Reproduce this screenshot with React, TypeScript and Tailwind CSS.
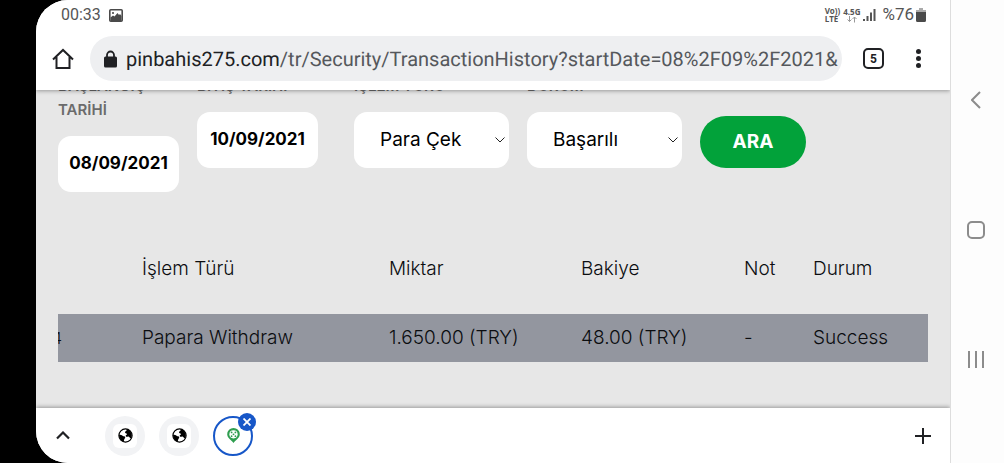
const columns = [
  { name: '', width: 'w-[84px]' },
  { name: 'İşlem Türü', width: 'w-[247px]' },
  { name: 'Miktar', width: 'w-[192px]' },
  { name: 'Bakiye', width: 'w-[163px]' },
  { name: 'Not', width: 'w-[69px]' },
  { name: 'Durum', width: '' },
];

const rows = [['4', 'Papara Withdraw', '1.650.00 (TRY)', '48.00 (TRY)', '-', 'Success']];

function Globe() {
  return (
    <svg width="15" height="15" viewBox="0 0 15 15">
      <circle cx="7.500" cy="7.500" r="6.600" fill="#fff" stroke="#000" strokeWidth="1.200" />
      <path d="M8.500 1C10 1.300 13.800 3.500 13.800 7.200c0 1.200-.4 2.300-1 3.200-1-.2-1.200-1.500-2.300-1.900-.9-.3-1.300.6-2.300.2-.9-.4-.5-1.600.3-1.900C9.700 6.400 8.800 5.600 7.700 5.200 7 4.900 6.700 4.200 7.300 3.600c.8-.6 1.700-.8 1.200-2.600z" />
      <path d="M1 6.800c1.300-.2 2.700.1 3.600.9.900.8 2.300.3 2.600 1.500.2 1-.8 1.300-1 2.200-.2.900-.5 1.700-.4 2.400C3 13 1 10.500 1 6.800z" />
    </svg>
  );
}

function StatusBar() {
  return (
    <div className="flex h-[30px] items-center justify-between pl-[25px] pr-6 font-[Roboto] text-[#555]">
      <div className="flex items-center gap-2">
        <span className="text-base">00:33</span>
        <svg width="14" height="13" viewBox="0 0 14 13">
          <rect x=".8" y=".8" width="12.400" height="11.400" rx="1" fill="#fff" stroke="#4a4a4a" strokeWidth="1.600" />
          <path d="M1.500 12V8.500L4 6.500l1.500 1 3-3.500L10 6l1-1 1.500 2v5z" fill="#4a4a4a" />
          <circle cx="4" cy="4" r="1.100" fill="#4a4a4a" />
        </svg>
      </div>
      <div className="flex items-center">
        <div className="font-[Open_Sans] text-[8px] leading-[8px] font-bold">
          <div>Vo))</div>
          <div>LTE</div>
        </div>
        <div className="ml-[3px] text-center font-[Open_Sans] text-[8px] leading-[8px] font-bold">
          <div>4.5G</div>
          <svg width="10" height="7" viewBox="0 0 10 7" fill="none" stroke="#999" className="mx-auto">
            <path d="M2.500 0v5.500M.5 3.500l2 2 2-2M7.500 6.500V1M5.500 3l2-2 2 2" />
          </svg>
        </div>
        <svg width="13" height="14" viewBox="0 0 13 14" fill="currentColor" className="ml-[3px]">
          <path d="M0 11h2v2H0zM3.500 8h2v5h-2zM7 4.500h2V13H7zM10.500 1h2v12h-2z" />
        </svg>
        <span className="ml-1.5 text-[17px]">%76</span>
        <svg width="10" height="14" viewBox="0 0 10 14" className="ml-0.5">
          <path d="M3 0h4v2h3v3H0V2h3z" fill="#aaa" />
          <path d="M0 4h10v8.500a1.500 1.500 0 0 1-1.500 1.500h-7A1.500 1.500 0 0 1 0 12.500z" fill="#4a4a4a" />
        </svg>
      </div>
    </div>
  );
}

function AddressBar() {
  return (
    <div className="flex h-[60px] items-center pb-[3px] pl-[16px] pr-[29px]">
      <button aria-label="Home" className="shrink-0">
        <svg width="22" height="22" viewBox="0 0 22 22" fill="none" stroke="#202124" strokeWidth="2">
          <path d="M1 11.500 11 2l10 9.500M4.500 9v11h13V9" />
        </svg>
      </button>
      <div className="ml-4 flex h-[45px] min-w-0 flex-1 items-center rounded-full bg-[#eeeff1] pl-[14px]">
        <svg width="13" height="18" viewBox="0 0 13 18" className="shrink-0">
          <path d="M3 8V5a3.500 3.500 0 0 1 7 0v3" fill="none" stroke="#202124" strokeWidth="1.800" />
          <rect y="6.500" width="13" height="11" rx="1.500" fill="#202124" />
        </svg>
        <div className="ml-[9px] font-[Roboto] text-[20px] whitespace-nowrap text-[#55585c] [text-rendering:geometricPrecision]">
          <span className="text-[#202124]">pinbahis275.com</span>
          /tr/Security/TransactionHistory?startDate=08%2F09%2F2021&amp;
        </div>
      </div>
      <button className="ml-[21px] flex size-[21px] shrink-0 items-center justify-center rounded-[5px] border-2 border-[#202124] font-[Roboto] text-[12px] font-bold text-[#202124]">
        5
      </button>
      <button aria-label="Menu" className="ml-[32px] flex shrink-0 flex-col gap-[2px]">
        <span className="size-[5px] rounded-full bg-[#202124]" />
        <span className="size-[5px] rounded-full bg-[#202124]" />
        <span className="size-[5px] rounded-full bg-[#202124]" />
      </button>
    </div>
  );
}

function DateField({ id, label, value }: { id: string; label: string; value: string }) {
  return (
    <div className="flex w-[121px] flex-col gap-[14px]">
      <label htmlFor={id} className="text-[15px] leading-6 font-semibold text-[#6b6b6b]">
        {label}
      </label>
      <input
        id={id}
        type="text"
        defaultValue={value}
        className="h-14 w-full rounded-[13px] bg-white pb-0.5 text-center text-[17px] font-bold text-black"
      />
    </div>
  );
}

function SelectField({ id, label, value }: { id: string; label: string; value: string }) {
  return (
    <div className="flex w-[155px] flex-col gap-[14px]">
      <label htmlFor={id} className="text-[15px] leading-6 font-semibold text-[#6b6b6b]">
        {label}
      </label>
      <div className="relative">
        <select
          id={id}
          defaultValue={value}
          className="h-14 w-full appearance-none rounded-[13px] bg-white pl-[26px] text-[19px] text-black"
        >
          <option>{value}</option>
        </select>
        <svg
          width="10"
          height="6"
          viewBox="0 0 10 6"
          fill="none"
          stroke="#222"
          className="pointer-events-none absolute top-[25px] right-1"
        >
          <path d="M.5.5 5 5 9.500.5" />
        </svg>
      </div>
    </div>
  );
}

function TransactionTable() {
  return (
    <table className="mt-[53px] w-full table-fixed text-left text-[19px] text-[#0b0d10]">
      <thead>
        <tr className="h-12">
          {columns.map((col) => (
            <th key={col.name} className={`${col.width} font-light`}>
              {col.name}
            </th>
          ))}
        </tr>
      </thead>
      <tbody>
        <tr className="h-[21px]" />
        {rows.map((row) => (
          <tr key={row[1]} className="h-12 bg-[#93969f]">
            {row.map((cell, i) => (
              <td key={i} className={i === 0 ? 'overflow-hidden text-base font-light' : 'font-light'}>
                <span className={i === 0 ? '-ml-1.5' : ''}>{cell}</span>
              </td>
            ))}
          </tr>
        ))}
      </tbody>
    </table>
  );
}

function TabStrip() {
  return (
    <footer className="relative flex h-[55px] shrink-0 items-center bg-white pl-5 pr-[19px] shadow-[0_-1px_4px_rgba(0,0,0,0.35)]">
      <button aria-label="Show tabs">
        <svg width="14" height="9" viewBox="0 0 14 9" fill="none" stroke="#202124" strokeWidth="2.200">
          <path d="m1 7.500 6-6 6 6" />
        </svg>
      </button>
      <div className="ml-[35px] flex gap-[14px]">
        {[1, 2].map((tab) => (
          <button
            key={tab}
            aria-label="Tab"
            className="flex size-10 items-center justify-center rounded-full bg-[#f2f3f5]"
          >
            <span className="flex size-6 items-center justify-center rounded-[6px] bg-white">
              <Globe />
            </span>
          </button>
        ))}
        <div className="relative">
          <button
            aria-label="Current tab"
            className="flex size-10 items-center justify-center rounded-full border-2 border-[#1757c8]"
          >
            <svg width="13" height="15" viewBox="0 0 13 15">
              <path d="M6.500 0A6.300 6.300 0 0 0 .2 6.300C.2 10 4 11.500 6.500 15 9 11.500 12.800 10 12.800 6.300A6.300 6.300 0 0 0 6.500 0z" fill="#2f9e50" />
              <circle cx="6.500" cy="6.300" r="4.100" fill="#fff" />
              <g fill="#2f9e50">
                <circle cx="6.500" cy="6.300" r=".9" />
                <circle cx="4.600" cy="4.400" r=".9" />
                <circle cx="8.400" cy="4.400" r=".9" />
                <circle cx="4.600" cy="8.200" r=".9" />
                <circle cx="8.400" cy="8.200" r=".9" />
              </g>
            </svg>
          </button>
          <button
            aria-label="Close tab"
            className="absolute -top-[3px] -right-[3px] flex size-[18px] items-center justify-center rounded-full bg-[#1757c8]"
          >
            <svg width="8" height="8" viewBox="0 0 8 8" stroke="#fff" strokeWidth="1.800">
              <path d="m.5.5 7 7M7.500.5l-7 7" />
            </svg>
          </button>
        </div>
      </div>
      <button aria-label="New tab" className="ml-auto">
        <svg width="16" height="16" viewBox="0 0 16 16" stroke="#202124" strokeWidth="2">
          <path d="M8 0v16M0 8h16" />
        </svg>
      </button>
    </footer>
  );
}

function SystemNav() {
  return (
    <nav className="flex w-[54px] shrink-0 flex-col items-center justify-between border-l border-[#ddd] bg-[#fdfdfd] pt-[91px] pr-1 pb-[95px]">
      <button aria-label="Back">
        <svg width="10" height="18" viewBox="0 0 10 18" fill="none" stroke="#8c8c8c" strokeWidth="2">
          <path d="M9 1 1 9l8 8" />
        </svg>
      </button>
      <button aria-label="Home" className="size-[18px] rounded-[5px] border-2 border-[#8c8c8c]" />
      <button aria-label="Recent apps" className="flex gap-[5px]">
        <span className="h-[17px] w-0.5 bg-[#8c8c8c]" />
        <span className="h-[17px] w-0.5 bg-[#8c8c8c]" />
        <span className="h-[17px] w-0.5 bg-[#8c8c8c]" />
      </button>
    </nav>
  );
}

export default function App() {
  return (
    <div className="flex h-screen bg-black pl-9 font-[Inter,sans-serif]">
      <div className="flex min-w-0 flex-1 flex-col overflow-hidden rounded-l-[32px] bg-white">
        <header className="relative z-10 shrink-0 bg-white shadow-[0_1px_4px_rgba(0,0,0,0.35)]">
          <StatusBar />
          <AddressBar />
        </header>
        <main className="min-h-0 flex-1 overflow-hidden bg-[#e7e7e7] px-[22px]">
          <form className="-mt-4 flex items-start gap-[18px]">
            <DateField id="start" label="BAŞLANGIÇ TARİHİ" value="08/09/2021" />
            <DateField id="end" label="BİTİŞ TARİHİ" value="10/09/2021" />
            <div className="ml-[18px]">
              <SelectField id="type" label="İŞLEM TÜRÜ" value="Para Çek" />
            </div>
            <SelectField id="state" label="DURUM" value="Başarılı" />
            <button
              type="button"
              className="mt-[42px] h-[52px] w-[106px] rounded-full bg-[#02a23a] text-[19px] font-bold text-white"
            >
              ARA
            </button>
          </form>
          <TransactionTable />
        </main>
        <TabStrip />
      </div>
      <SystemNav />
    </div>
  );
}
